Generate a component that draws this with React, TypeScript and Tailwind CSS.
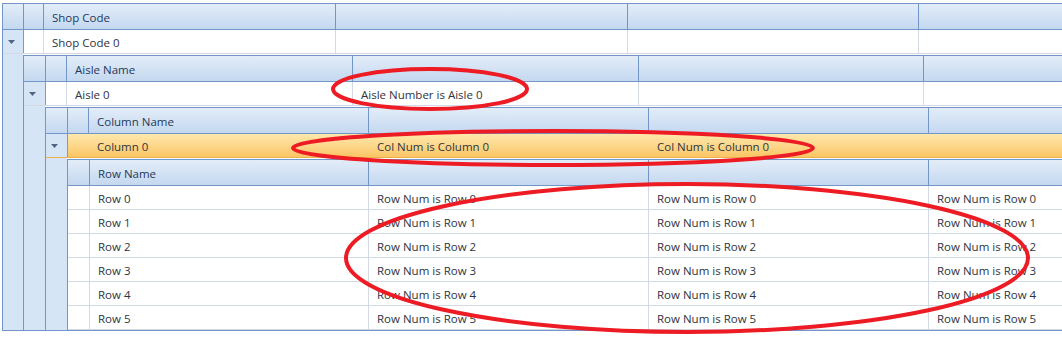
import React from 'react';

// nested master/detail grid with hand drawn red annotations on top

const HEAD = 'flex h-[26px] border-b border-[#7396c9] bg-linear-to-b from-[#e3edf8] to-[#c4d8f0]';
const ROW = 'flex h-[24px] border-b border-[#d3dae6] bg-white';
const HCELL = 'shrink-0 flex items-center px-2 pt-[3px] border-r border-[#7396c9] text-[#1e395b] whitespace-nowrap overflow-hidden';
const DCELL = 'shrink-0 flex items-center px-2 pt-[2px] border-r border-[#d3dae6] whitespace-nowrap overflow-hidden';

const Arrow: React.FC = () => (
    <svg width="7" height="4" viewBox="0 0 7 4" className="ml-[5px]">
        <path d="M0 0 H7 L3.5 4 Z" fill="#4f6588" />
    </svg>
);

interface Cols {
    widths: string[];
}

const HeaderRow: React.FC<Cols & { indents: string[]; title: string }> = ({ widths, indents, title }) => (
    <div className={HEAD}>
        {indents.map((w, i) => (
            <div key={i} className={`${w} shrink-0 border-r border-[#7396c9]`} />
        ))}
        {widths.map((w, i) => (
            <div key={i} className={`${HCELL} ${w}`}>{i === 0 ? title : ''}</div>
        ))}
        <div className="flex-1" />
    </div>
);

const Sheet: React.FC<{ children: React.ReactNode }> = ({ children }) => (
    <div className="border-l border-t border-[#7396c9] bg-white">{children}</div>
);

const Detail: React.FC<{ indent: string; children: React.ReactNode }> = ({ indent, children }) => (
    <div className="flex">
        <div className={`${indent} shrink-0 bg-[#d6e5f5]`} />
        <div className="flex-1 pt-[1px] bg-white">{children}</div>
    </div>
);

const rows = [0, 1, 2, 3, 4, 5];

const App: React.FC = () => {
    return (
        <div
            className="relative w-[1062px] h-[338px] overflow-hidden bg-white pl-[2px] pt-[3px] text-[11.5px] text-[#2e3440]"
            style={{ fontFamily: '"Segoe UI", "Open Sans", sans-serif' }}
        >
            <div className="border-l border-t border-b border-[#7396c9] bg-[#d6e5f5]">
                {/* level 1: shops */}
                <HeaderRow indents={['w-[21px]', 'w-[20px]']} widths={['w-[292px]', 'w-[292px]', 'w-[291px]']} title="Shop Code" />
                <div className={ROW}>
                    <div className="w-[21px] shrink-0 flex items-center bg-[#d6e5f5] border-r border-[#7d9bc5]"><Arrow /></div>
                    <div className="w-[20px] shrink-0 border-r border-[#d3dae6]" />
                    <div className={`${DCELL} w-[292px]`}>Shop Code 0</div>
                    <div className={`${DCELL} w-[292px]`} />
                    <div className={`${DCELL} w-[291px]`} />
                    <div className="flex-1" />
                </div>
                <Detail indent="w-[20px]">
                    {/* level 2: aisles */}
                    <Sheet>
                        <HeaderRow indents={['w-[22px]', 'w-[21px]']} widths={['w-[286px]', 'w-[286px]', 'w-[285px]']} title="Aisle Name" />
                        <div className={ROW}>
                            <div className="w-[22px] shrink-0 flex items-center bg-[#d6e5f5] border-r border-[#7d9bc5]"><Arrow /></div>
                            <div className="w-[21px] shrink-0 border-r border-[#d3dae6]" />
                            <div className={`${DCELL} w-[286px]`}>Aisle 0</div>
                            <div className={`${DCELL} w-[286px]`}>Aisle Number is Aisle 0</div>
                            <div className={`${DCELL} w-[285px]`} />
                            <div className="flex-1" />
                        </div>
                        <Detail indent="w-[21px]">
                            {/* level 3: columns */}
                            <Sheet>
                                <HeaderRow indents={['w-[22px]', 'w-[21px]']} widths={['w-[280px]', 'w-[280px]', 'w-[280px]']} title="Column Name" />
                                <div className="flex h-[24px] border-b border-[#eeb04a] bg-linear-to-b from-[#fee8ad] to-[#fbc664]">
                                    <div className="w-[22px] shrink-0 flex items-center bg-[#d6e5f5] border-r border-[#7d9bc5]"><Arrow /></div>
                                    <div className="w-[21px] shrink-0" />
                                    <div className="w-[280px] shrink-0 flex items-center px-2 pt-[2px]">Column 0</div>
                                    <div className="w-[280px] shrink-0 flex items-center px-2 pt-[2px]">Col Num is Column 0</div>
                                    <div className="w-[280px] shrink-0 flex items-center px-2 pt-[2px]">Col Num is Column 0</div>
                                    <div className="flex-1" />
                                </div>
                                <Detail indent="w-[21px]">
                                    {/* level 4: rows */}
                                    <Sheet>
                                        <HeaderRow indents={['w-[22px]']} widths={['w-[279px]', 'w-[280px]', 'w-[280px]']} title="Row Name" />
                                        {rows.map(r => (
                                            <div key={r} className={ROW}>
                                                <div className="w-[22px] shrink-0 border-r border-[#d3dae6]" />
                                                <div className={`${DCELL} w-[279px]`}>Row {r}</div>
                                                <div className={`${DCELL} w-[280px]`}>Row Num is Row {r}</div>
                                                <div className={`${DCELL} w-[280px]`}>Row Num is Row {r}</div>
                                                <div className="flex-1 flex items-center px-2 pt-[2px] whitespace-nowrap">Row Num is Row {r}</div>
                                            </div>
                                        ))}
                                    </Sheet>
                                </Detail>
                            </Sheet>
                        </Detail>
                    </Sheet>
                </Detail>
            </div>

            {/* annotations */}
            <svg className="absolute inset-0 pointer-events-none" width="1062" height="338">
                <g fill="none" stroke="#ed1c24" strokeWidth="4">
                    <ellipse cx="430" cy="89" rx="97" ry="20" />
                    <ellipse cx="553" cy="148" rx="260" ry="17" />
                    <ellipse cx="687" cy="258" rx="341" ry="74" />
                </g>
            </svg>
        </div>
    );
};

export default App;
